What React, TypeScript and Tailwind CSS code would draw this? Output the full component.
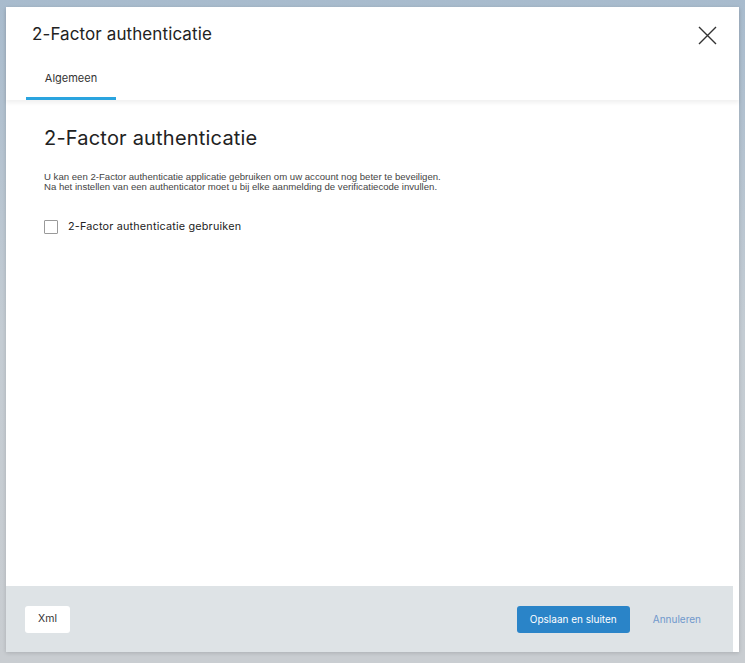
import React from 'react';

const App: React.FC = () => {
  return (
    <div
      className="relative w-[745px] h-[663px] overflow-hidden bg-gradient-to-b from-[#a8bbcd] via-[#c4ccd3] to-[#c9cdd1] pt-[7px] pl-[6px]"
      style={{ fontFamily: 'Inter, "Noto Sans", sans-serif' }}
    >
      {/* Dialog */}
      <div className="flex flex-col w-[733px] h-[645px] bg-white shadow-[0_1px_4px_rgba(0,0,0,0.15)]">
        {/* Header */}
        <div className="relative z-10 shadow-[0_3px_4px_rgba(0,0,0,0.06)]">
          <div className="flex items-center justify-between pl-[26px] pr-[22px] pt-[10px] h-[46px]">
            <h1 className="text-[17px] text-[#222] tracking-[0.1px]">2-Factor authenticatie</h1>
            <button className="w-[20px] h-[20px] flex items-center justify-center">
              <svg width="19" height="19" viewBox="0 0 19 19" fill="none" stroke="#333" strokeWidth="1.4">
                <path d="M1 1L18 18M18 1L1 18" />
              </svg>
            </button>
          </div>
          <div className="flex pl-[20px] mt-[10px]">
            <div className="w-[90px] flex flex-col items-center">
              <span className="text-[11px] text-[#333] h-[34px] leading-[30px]">Algemeen</span>
              <div className="w-full h-[3px] bg-[#2aa4df]" />
            </div>
          </div>
        </div>

        {/* Body */}
        <div className="flex-1 pl-[38px] pt-[24px]">
          <h2 className="text-[20px] text-[#222] tracking-[0.2px] leading-[28px]">2-Factor authenticatie</h2>
          <p className="mt-[20px] text-[9.6px] leading-[10px] text-[#444]" style={{ fontFamily: '"Liberation Sans", Arial, sans-serif' }}>
            U kan een 2-Factor authenticatie applicatie gebruiken om uw account nog beter te beveiligen.
            <br />
            Na het instellen van een authenticator moet u bij elke aanmelding de verificatiecode invullen.
          </p>
          <label className="mt-[27px] flex items-center gap-[10px]">
            <span className="w-[14px] h-[14px] border border-[#9a9a9a] bg-white rounded-[1px]" />
            <span className="text-[10.8px] text-[#222] tracking-[0.2px]">2-Factor authenticatie gebruiken</span>
          </label>
        </div>

        {/* Footer */}
        <div className="h-[66px] mr-[6px] bg-[#dee3e6] flex items-center pl-[19px] pr-[32px]">
          <button className="h-[27px] w-[45px] bg-white rounded-[3px] text-[10.5px] text-[#333]">Xml</button>
          <div className="flex-1" />
          <button className="h-[27px] w-[113px] bg-[#2a84c8] rounded-[3px] text-[10px] text-white">Opslaan en sluiten</button>
          <span className="ml-[23px] text-[10px] text-[#7098cc]">Annuleren</span>
        </div>
      </div>
    </div>
  );
};

export default App;
